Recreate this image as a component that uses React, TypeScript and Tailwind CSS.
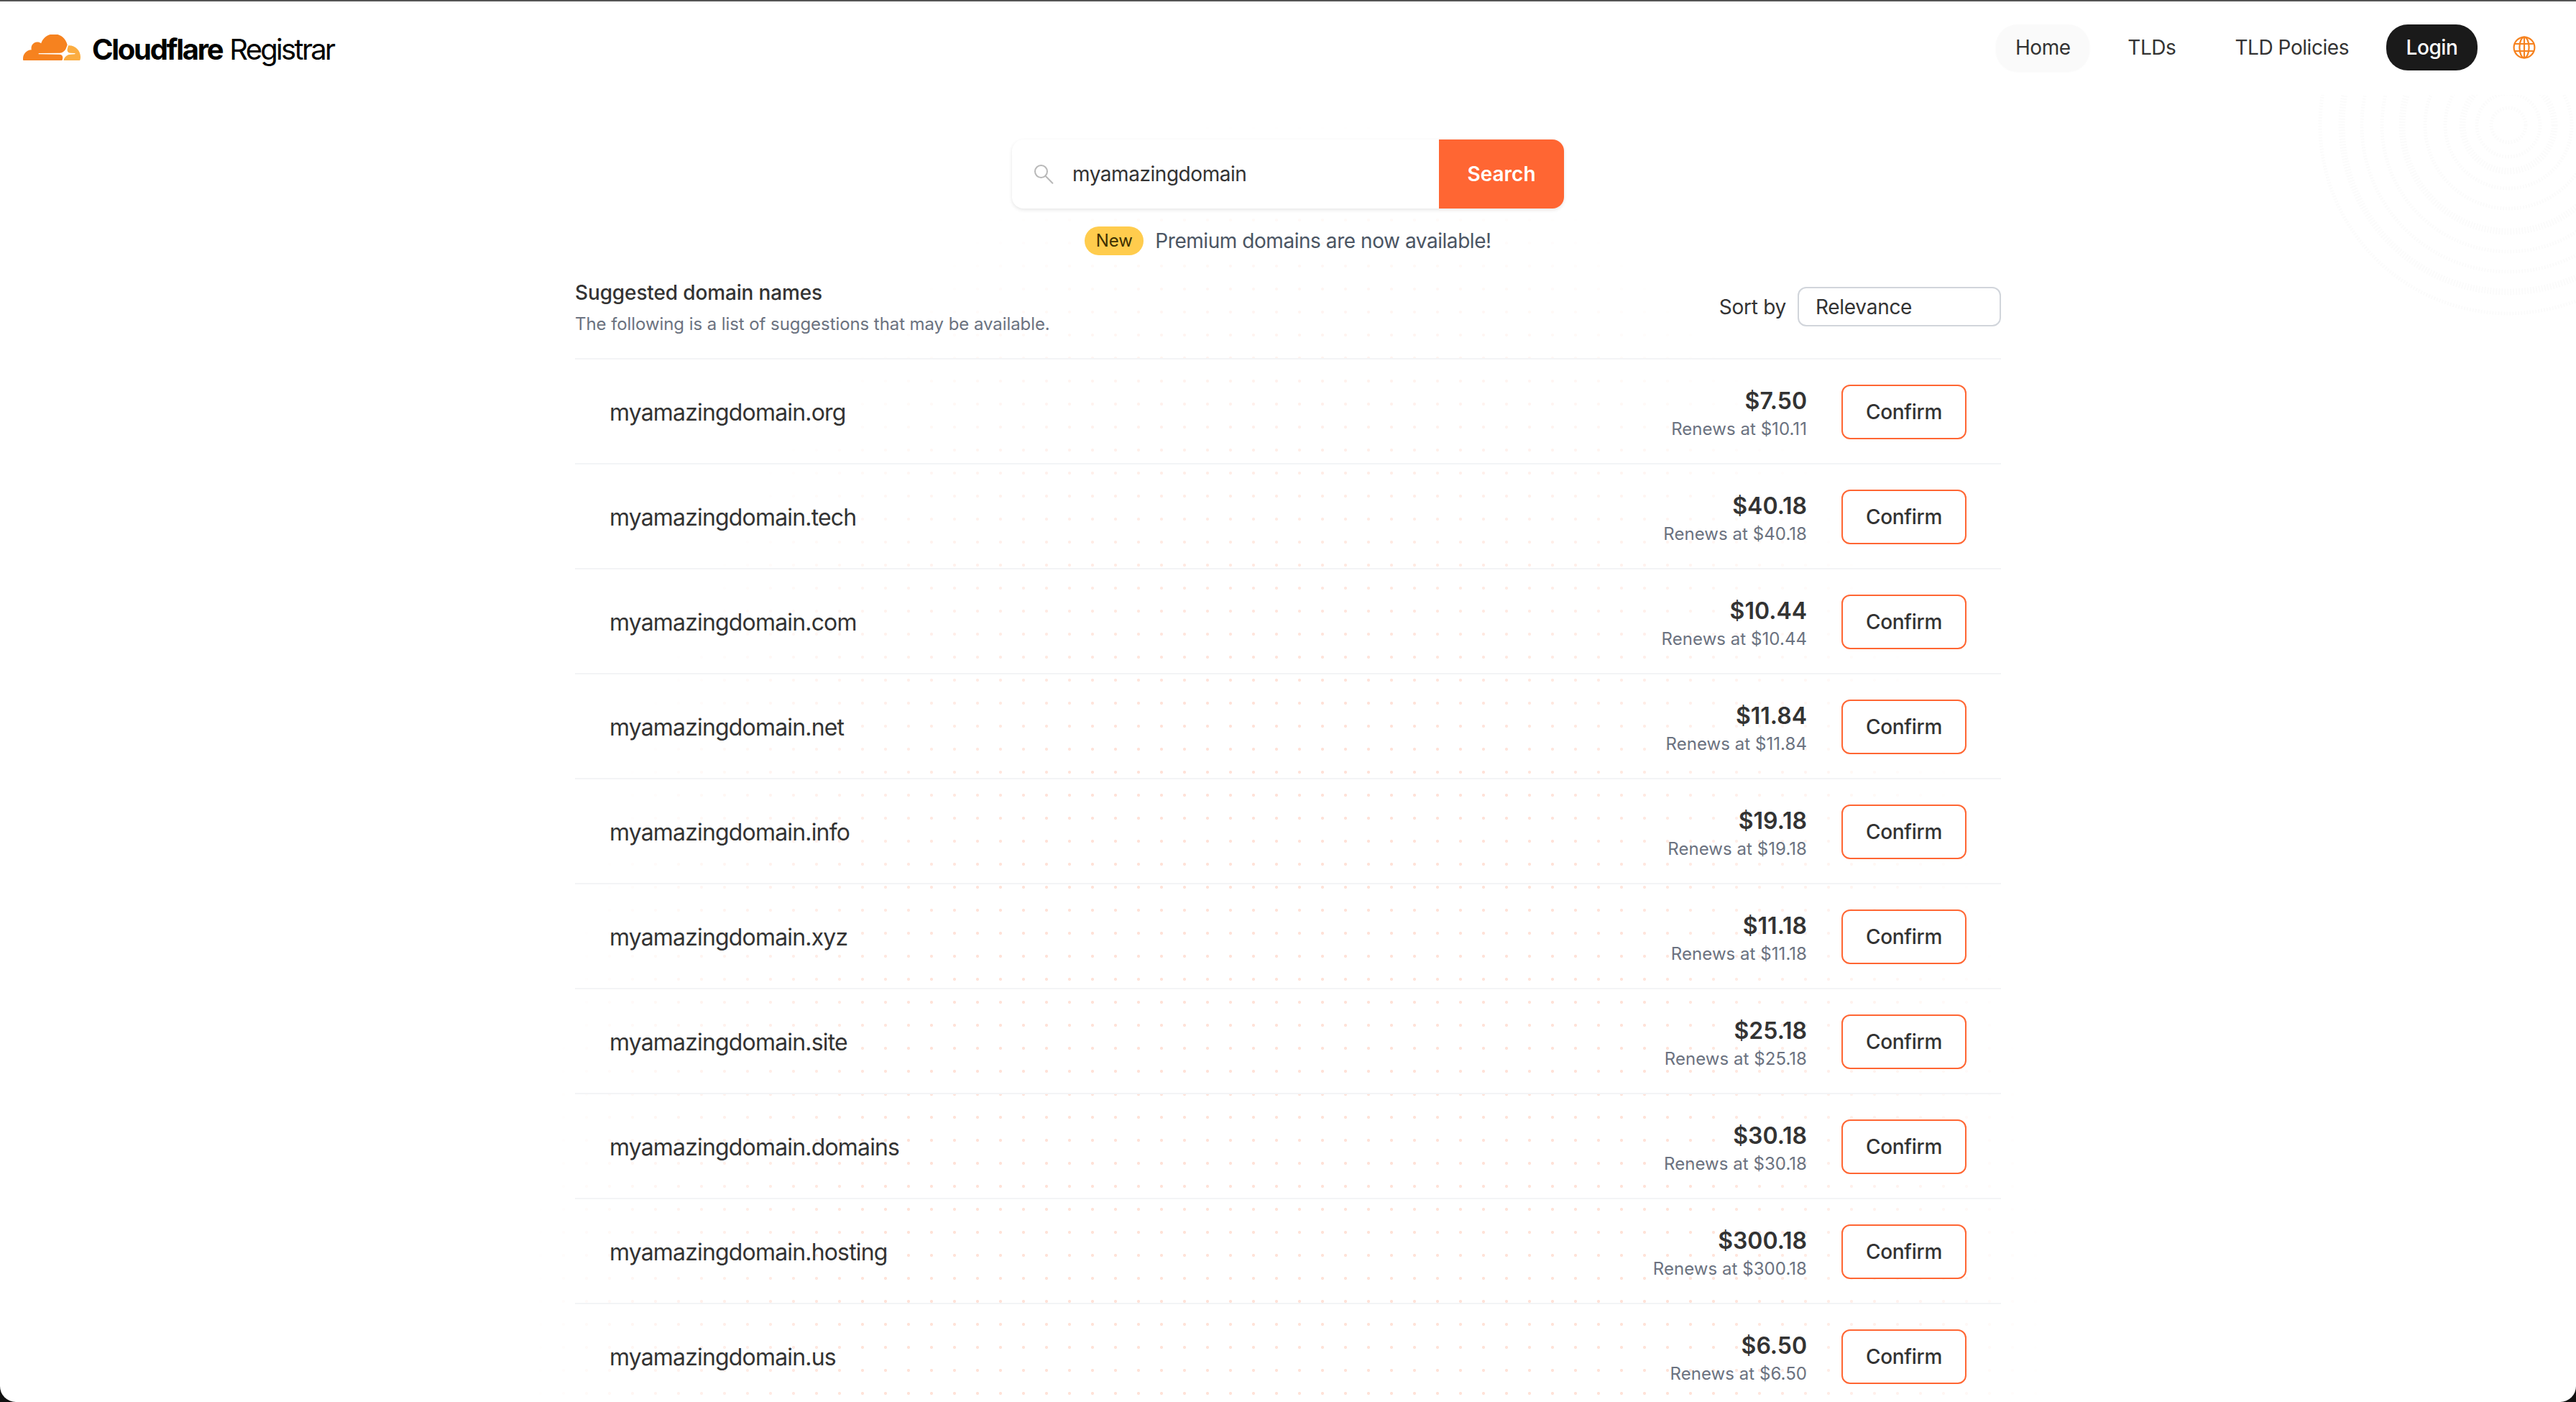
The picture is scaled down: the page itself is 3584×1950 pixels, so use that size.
import React from "react";

const rows = [
  ["org", "$7.50", "$10.11"],
  ["tech", "$40.18", "$40.18"],
  ["com", "$10.44", "$10.44"],
  ["net", "$11.84", "$11.84"],
  ["info", "$19.18", "$19.18"],
  ["xyz", "$11.18", "$11.18"],
  ["site", "$25.18", "$25.18"],
  ["domains", "$30.18", "$30.18"],
  ["hosting", "$300.18", "$300.18"],
  ["us", "$6.50", "$6.50"],
];

function CloudLogo() {
  return (
    <svg width="80" height="36" viewBox="0 6.8 24 10.65" preserveAspectRatio="none" className="shrink-0">
      <path
        fill="#f6821f"
        d="M16.5088 16.8447c.1475-.5068.0908-.9707-.1553-1.3154-.2246-.3164-.6045-.499-1.0615-.5205l-8.6592-.1123a.1559.1559 0 0 1-.1333-.0713c-.0283-.042-.0351-.0986-.021-.1553.0278-.084.1123-.1484.2036-.1562l8.7359-.1123c1.0351-.0489 2.1601-.8868 2.5537-1.9136l.499-1.3013c.0215-.0561.0293-.1128.0147-.168-.5625-2.5463-2.835-4.4453-5.5499-4.4453-2.5039 0-4.6284 1.6177-5.3876 3.8614-.4927-.3658-1.1187-.5625-1.794-.499-1.2026.119-2.1665 1.083-2.2861 2.2856-.0283.31-.0069.6128.0635.894C1.5683 13.171 0 14.7754 0 16.752c0 .1748.0142.3515.0352.5273.0141.083.0844.1475.1689.1475h15.9814c.0909 0 .1758-.0645.2032-.1553l.12-.4268z"
      />
      <path
        fill="#fbad41"
        d="M19.2656 11.2813c-.0771 0-.1611 0-.2383.0112-.0566 0-.1054.0415-.127.0976l-.3378 1.1744c-.1475.5068-.0918.9707.1543 1.3164.2256.3164.6055.498 1.0625.5195l1.8437.1133c.0557 0 .1055.0263.1329.0703.0283.043.0351.1074.0214.1562-.0283.084-.1132.1485-.204.1553l-1.921.1123c-1.041.0488-2.1582.8867-2.5527 1.914l-.1406.3585c-.0283.0713.0215.1416.0986.1416h6.5977c.0771 0 .1474-.0489.169-.126.1122-.4082.1757-.837.1757-1.2803 0-2.6025-2.125-4.727-4.7344-4.727"
      />
    </svg>
  );
}

function Globe() {
  return (
    <svg width="32" height="32" viewBox="0 0 32 32" fill="none" stroke="#f6821f" strokeWidth="2.2" className="shrink-0">
      <circle cx="16" cy="16" r="14.4" />
      <ellipse cx="16" cy="16" rx="6.6" ry="14.4" />
      <path d="M16 1.6v28.8M3 11h26M3 21h26" />
    </svg>
  );
}

function SearchIcon() {
  return (
    <svg width="28" height="28" viewBox="0 0 28 28" fill="none" stroke="#b8b8b8" strokeWidth="2" className="shrink-0">
      <circle cx="10.5" cy="10.5" r="8.5" />
      <path d="M16.8 17l9.6 9.8" strokeLinecap="round" />
    </svg>
  );
}

function Rings() {
  const radii = [24, 44, 64, 88, 116, 148, 176, 204, 232, 262];
  return (
    <svg width="400" height="400" viewBox="0 0 400 400" fill="none" className="absolute right-0 top-[60px]">
      <defs>
        <clipPath id="rings-clip">
          <path d="M9 70H400V400H9Z" />
        </clipPath>
      </defs>
      <g clipPath="url(#rings-clip)" stroke="#fbfbfb" strokeDasharray="2 2">
        {radii.map((r, i) => (
          <circle key={r} cx="306" cy="112" r={r} strokeWidth={i % 3 === 2 ? 9 : 5} />
        ))}
      </g>
    </svg>
  );
}

function Row({ tld, price, renew }: { tld: string; price: string; renew: string }) {
  return (
    <div className="flex h-[146px] shrink-0 items-center justify-between border-t-2 border-[#f3f4f6] px-[48px] pt-[2px]">
      <div className="mt-[1px] text-[32px] leading-[48px] tracking-[-0.026em] text-[#333333]">myamazingdomain.{tld}</div>
      <div className="flex items-center gap-[48px]">
        <div className="flex flex-col items-end pt-[2px]">
          <div className="text-[32px] font-semibold leading-[44px] text-[#333333]">{price}</div>
          <div className="mt-[1px] text-[24px] leading-[32px] tracking-[0.05px] text-[#6b7280]">Renews at {renew}</div>
        </div>
        <div className="flex h-[76px] w-[174px] items-center justify-center rounded-[12px] border-2 border-[#ff6633] bg-white text-[28px] font-medium tracking-[-0.01em] text-[#333333]">
          Confirm
        </div>
      </div>
    </div>
  );
}

export default function App() {
  return (
    <div className="h-[1950px] w-[3584px] overflow-hidden bg-[#111111] font-['Inter',sans-serif]">
      <div className="relative flex h-full flex-col overflow-hidden rounded-b-[22px] border-t-2 border-[#555555] bg-white">
        <div className="pointer-events-none absolute inset-0 bg-[radial-gradient(circle,#ffe2d8_1.8px,transparent_2.4px)] bg-[length:32px_32px] [mask-image:radial-gradient(1060px_1800px_at_1792px_1950px,black_55%,transparent_100%)]" />
        <Rings />

        <header className="relative flex h-[128px] shrink-0 items-center justify-between pl-[32px] pr-[56px]">
          <div className="flex items-center gap-[16px]">
            <CloudLogo />
            <div className="mt-[5px] flex items-baseline gap-[10px] text-[40px] leading-none text-black">
              <span className="font-bold tracking-[-2.3px]">Cloudflare</span>
              <span className="font-normal tracking-[-2.7px]">Registrar</span>
            </div>
          </div>
          <nav className="flex items-center text-[28px] font-normal tracking-[-0.016em] text-[#333333]">
            <div className="flex h-[65px] w-[130px] items-center justify-center rounded-[30px] bg-[#fafafa] shadow-[0_1px_3px_rgba(0,0,0,0.03)]">Home</div>
            <div className="ml-[53px]">TLDs</div>
            <div className="ml-[82px]">TLD Policies</div>
            <div className="ml-[52px] flex h-[64px] w-[127px] items-center justify-center rounded-[30px] bg-[#1a1a1a] font-medium text-white">Login</div>
            <div className="ml-[49px] flex"><Globe /></div>
          </nav>
        </header>

        <main className="relative flex flex-col">
          <div className="mx-auto mt-[64px] flex h-[96px] w-[768px] overflow-hidden rounded-[16px] bg-white shadow-[0_2px_5px_rgba(0,0,0,0.1)]">
            <div className="flex flex-1 items-center gap-[26px] pl-[30px]">
              <SearchIcon />
              <span className="text-[28px] tracking-[-0.016em] text-[#333333]">myamazingdomain</span>
            </div>
            <div className="flex w-[174px] items-center justify-center bg-[#ff6633] text-[28px] font-semibold text-white">Search</div>
          </div>

          <div className="mt-[24px] flex items-center justify-center gap-[16px]">
            <div className="flex h-[40px] w-[82px] items-center justify-center rounded-[20px] bg-[#ffcc4d] text-[24px] text-[#3d3000]">New</div>
            <div className="text-[28px] tracking-[-0.016em] text-[#4b5563]">Premium domains are now available!</div>
          </div>

          <div className="mx-auto mt-[31px] w-[1984px]">
            <div className="flex h-[111px] items-start justify-between">
              <div>
                <div className="text-[28px] font-medium leading-[40px] tracking-[-0.005em] text-[#333333]">Suggested domain names</div>
                <div className="mt-[6px] text-[24px] leading-[36px] tracking-[-0.003em] text-[#6b7280]">The following is a list of suggestions that may be available.</div>
              </div>
              <div className="flex items-center gap-[16px] pt-[12px]">
                <div className="text-[28px] tracking-[-0.01em] text-[#333333]">Sort by</div>
                <div className="flex h-[55px] w-[283px] items-center rounded-[12px] border-2 border-[#d1d5db] bg-white pl-[23px] text-[28px] tracking-[-0.01em] text-[#333333]">Relevance</div>
              </div>
            </div>
            <div className="flex flex-col">
              {rows.map(([tld, price, renew]) => (
                <Row key={tld} tld={tld} price={price} renew={renew} />
              ))}
            </div>
          </div>
        </main>
      </div>
    </div>
  );
}
